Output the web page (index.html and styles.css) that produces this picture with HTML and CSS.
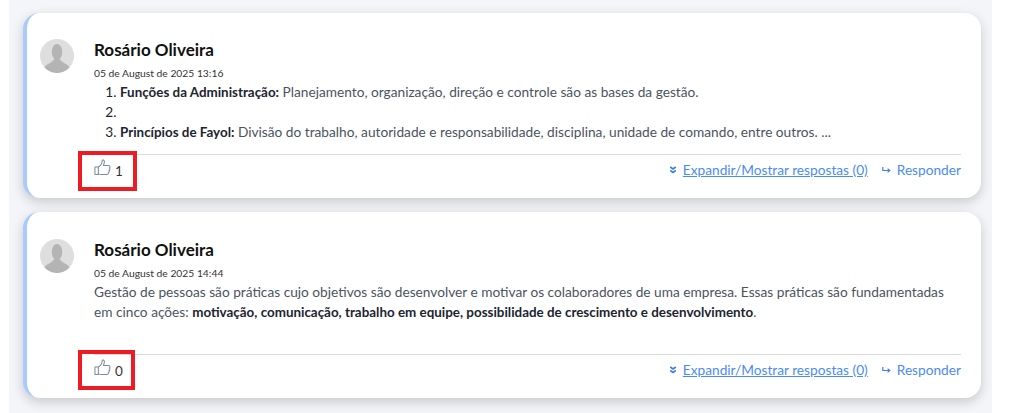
FILE: index.html
```html
<!DOCTYPE html>
<html>
<head>
    <meta charset="UTF-8">
    <meta name="viewport" content="width=device-width, initial-scale=1.0">
    <title>Comentários</title>
    <link rel="stylesheet" href="styles.css">
</head>
<body>
    <div class="page">
        <!-- First comment -->
        <div class="comment">
            <div class="comment-main">
                <svg class="avatar" viewBox="0 0 34 34">
                    <circle cx="17" cy="17" r="17" fill="#dedede"></circle>
                    <ellipse cx="17" cy="13" rx="5.2" ry="8" fill="#b4b4b4"></ellipse>
                    <path d="M4.5 28.5 C6 25 12 24 14.5 20 L19.5 20 C22 24 28 25 29.5 28.5 A17 17 0 0 1 4.5 28.5 Z" fill="#b4b4b4"></path>
                </svg>
                <div class="comment-body">
                    <div class="author">Rosário Oliveira</div>
                    <div class="date">05 de August de 2025 13:16</div>
                    <ol class="text-list">
                        <li><strong>Funções da Administração:</strong> <span class="muted">Planejamento, organização, direção e controle são as bases da gestão.</span></li>
                        <li></li>
                        <li><strong>Princípios de Fayol:</strong> <span class="muted">Divisão do trabalho, autoridade e responsabilidade, disciplina, unidade de comando, entre outros. ...</span></li>
                    </ol>
                </div>
            </div>
            <div class="comment-footer">
                <div class="likes">
                    <svg class="thumb" viewBox="0 0 18 18">
                        <path d="M1 8.5 H4.6 V16.5 H1 Z M4.6 8.5 C6.5 7.5 8.5 4.5 8.7 1.6 C8.8 0.6 11 0.8 11 3 C11 4.5 10.4 5.8 10 6.8 H15.5 C17.2 6.8 17.3 9 16.2 9.4 C17.2 10 17 11.6 15.9 12 C16.5 12.8 16.2 14 15.2 14.3 C15.5 15.5 14.8 16.5 13.6 16.5 H7.5 C6.2 16.5 5.4 16 4.6 15.6" fill="none" stroke="#7d8a9c" stroke-width="1.1" stroke-linejoin="round"></path>
                    </svg>
                    <span class="like-count">1</span>
                </div>
                <div class="actions">
                    <svg class="action-icon" viewBox="0 0 8 8">
                        <path d="M1.2 1 L4 3 L6.8 1 M1.2 4.5 L4 6.5 L6.8 4.5" fill="none" stroke="#3f7fe8" stroke-width="1.7"></path>
                    </svg>
                    <a class="expand-link" href="#">Expandir/Mostrar respostas (0)</a>
                    <svg class="action-icon reply-icon" viewBox="0 0 9 8">
                        <path d="M0.8 1 V4.5 H7.5 M5.6 2.6 L7.8 4.5 L5.6 6.4" fill="none" stroke="#3f7fe8" stroke-width="1.2"></path>
                    </svg>
                    <span class="reply-link">Responder</span>
                </div>
            </div>
            <div class="highlight"></div>
        </div>

        <!-- Second comment -->
        <div class="comment">
            <div class="comment-main">
                <svg class="avatar" viewBox="0 0 34 34">
                    <circle cx="17" cy="17" r="17" fill="#dedede"></circle>
                    <ellipse cx="17" cy="13" rx="5.2" ry="8" fill="#b4b4b4"></ellipse>
                    <path d="M4.5 28.5 C6 25 12 24 14.5 20 L19.5 20 C22 24 28 25 29.5 28.5 A17 17 0 0 1 4.5 28.5 Z" fill="#b4b4b4"></path>
                </svg>
                <div class="comment-body">
                    <div class="author">Rosário Oliveira</div>
                    <div class="date">05 de August de 2025 14:44</div>
                    <p class="text-plain">Gestão de pessoas são práticas cujo objetivos são desenvolver e motivar os colaboradores de uma empresa. Essas práticas são fundamentadas em cinco ações: <strong>motivação, comunicação, trabalho em equipe, possibilidade de crescimento e desenvolvimento</strong>.</p>
                </div>
            </div>
            <div class="comment-footer">
                <div class="likes">
                    <svg class="thumb" viewBox="0 0 18 18">
                        <path d="M1 8.5 H4.6 V16.5 H1 Z M4.6 8.5 C6.5 7.5 8.5 4.5 8.7 1.6 C8.8 0.6 11 0.8 11 3 C11 4.5 10.4 5.8 10 6.8 H15.5 C17.2 6.8 17.3 9 16.2 9.4 C17.2 10 17 11.6 15.9 12 C16.5 12.8 16.2 14 15.2 14.3 C15.5 15.5 14.8 16.5 13.6 16.5 H7.5 C6.2 16.5 5.4 16 4.6 15.6" fill="none" stroke="#7d8a9c" stroke-width="1.1" stroke-linejoin="round"></path>
                    </svg>
                    <span class="like-count">0</span>
                </div>
                <div class="actions">
                    <svg class="action-icon" viewBox="0 0 8 8">
                        <path d="M1.2 1 L4 3 L6.8 1 M1.2 4.5 L4 6.5 L6.8 4.5" fill="none" stroke="#3f7fe8" stroke-width="1.7"></path>
                    </svg>
                    <a class="expand-link" href="#">Expandir/Mostrar respostas (0)</a>
                    <svg class="action-icon reply-icon" viewBox="0 0 9 8">
                        <path d="M0.8 1 V4.5 H7.5 M5.6 2.6 L7.8 4.5 L5.6 6.4" fill="none" stroke="#3f7fe8" stroke-width="1.2"></path>
                    </svg>
                    <span class="reply-link">Responder</span>
                </div>
            </div>
            <div class="highlight highlight-narrow"></div>
        </div>
    </div>
</body>
</html>
```

FILE: styles.css
```css
html, body {
    margin: 0;
    height: 413px;
    overflow: hidden;
    background-color: white;
}

body {
    font-family: Lato, "Noto Sans", Arial, sans-serif;
    color: #212529;
}

.page {
    margin-left: 9px;
    width: 983px;
    height: 413px;
    box-sizing: border-box;
    padding: 13px 11px 0 14px;
    background-color: #f4f5f8;
    display: flex;
    flex-direction: column;
    gap: 14px;
}

.comment {
    position: relative;
    height: 185px;
    box-sizing: border-box;
    padding: 26px 20px 0 13px;
    background-color: white;
    border-left: 4px solid #a9cbfb;
    border-radius: 16px;
    box-shadow: 0 4px 12px rgba(0, 0, 0, 0.18);
    display: flex;
    flex-direction: column;
}

.comment + .comment {
    height: 186px;
    padding-top: 27px;
}

.comment-main {
    display: flex;
    gap: 20px;
    height: 115px;
}

.avatar {
    width: 34px;
    height: 34px;
    flex-shrink: 0;
}

.comment-body {
    flex: 1;
}

.author {
    font-size: 17px;
    font-weight: 700;
    line-height: 22px;
    color: #111;
}

.date {
    font-size: 10.3px;
    line-height: 14px;
    margin-top: 5px;
    color: #333;
}

.text-list {
    margin: 2px 0 0 0;
    padding-left: 26px;
    font-size: 13.7px;
    line-height: 20px;
}

.text-plain {
    margin: 2px 0 0 0;
    font-size: 13.7px;
    line-height: 20px;
    color: #4a5460;
}

strong {
    font-size: 13.4px;
    font-weight: 700;
    color: #1c2430;
}

.muted {
    color: #4a5460;
}

.comment-footer {
    margin-left: 54px;
    border-top: 1px solid #d9d9d9;
    display: flex;
    justify-content: space-between;
    align-items: center;
    height: 30px;
}

.likes {
    display: flex;
    align-items: flex-end;
    gap: 4px;
    margin-bottom: 2px;
}

.thumb {
    width: 17px;
    height: 17px;
    margin-bottom: 4px;
}

.like-count {
    font-size: 13.5px;
    line-height: 15px;
    margin-bottom: 1px;
    color: #333;
}

.actions {
    display: flex;
    align-items: center;
    font-size: 13.7px;
    margin-bottom: 1px;
    color: #4a8cf7;
}

.action-icon {
    width: 8px;
    height: 8px;
    margin-right: 6px;
}

.reply-icon {
    width: 9px;
    margin-left: 14px;
}

.expand-link {
    color: #4a8cf7;
}

.highlight {
    position: absolute;
    top: 138px;
    left: 51px;
    width: 59px;
    height: 40px;
    box-sizing: border-box;
    border: 4px solid #ed1c24;
}

.highlight-narrow {
    width: 57px;
}
```
